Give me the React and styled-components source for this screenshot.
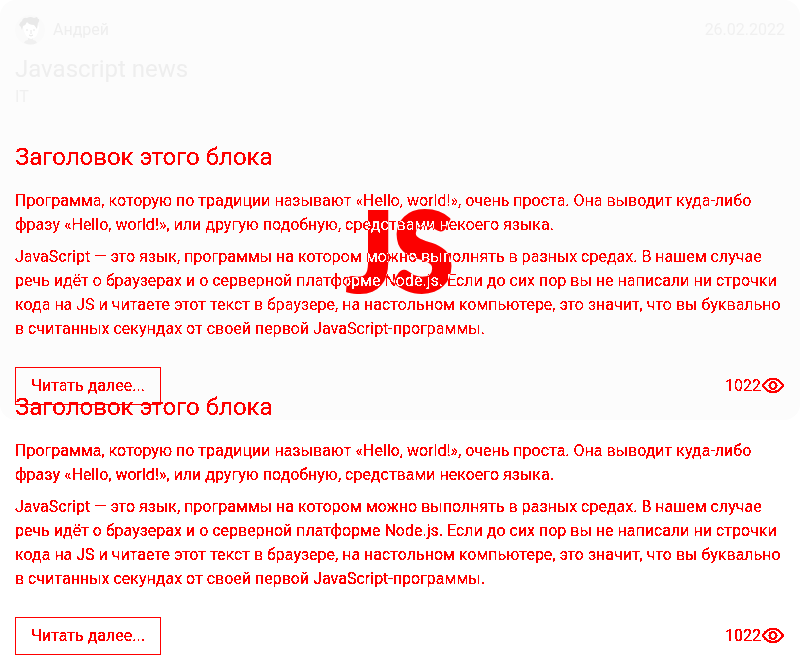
import React from "react";
import styled, { createGlobalStyle } from "styled-components";
import { MdOutlineVisibility } from "react-icons/md";

const GlobalStyle = createGlobalStyle`
  *, *::before, *::after { box-sizing: border-box; }
  body {
    margin: 0;
    background: #fff;
    color: #f00;
    font: 400 16px/24px Roboto, "Noto Sans", sans-serif;
  }
`;

const Page = styled.main`
  overflow: hidden;
`;

const Defs = styled.svg`
  position: absolute;
  width: 0;
  height: 0;
`;

const Card = styled.article`
  position: relative;
  isolation: isolate;
  padding: 15px;
  border-radius: 16px;
  background: #fcfcfc;
`;

const Header = styled.header`
  display: flex;
  align-items: center;
  color: #eee;
`;

const Avatar = styled.svg`
  width: 30px;
  height: 30px;
  margin-right: 8px;
`;

const UserName = styled.span`
  flex: 1;
`;

const CreatedAt = styled.time`
  color: #f0f0f0;
`;

const Title = styled.h1`
  margin: 8px 0 0;
  color: #eee;
  font-size: 24px;
  font-weight: 400;
  line-height: 32px;
`;

const Tag = styled.p`
  margin: 0 0 34px;
  color: #f0f0f0;
`;

const Section = styled.section`
  padding: ${({ $overlap }) => ($overlap ? "0 15px 15px" : "0")};
  margin-top: ${({ $overlap }) => ($overlap ? "-27px" : "0")};
  position: relative;
`;

const Heading = styled.h2`
  margin: 0 0 18px;
  font-size: 24px;
  font-weight: 400;
  line-height: 28px;
  filter: url(#crisp);
`;

const Content = styled.div`
  filter: url(${({ $bold }) => ($bold ? "#crispBold" : "#crisp")});
`;

const Paragraph = styled.p`
  margin: 0 0 8px;
`;

const Footer = styled.footer`
  display: flex;
  align-items: center;
  justify-content: space-between;
  margin-top: 26px;
`;

const ReadMore = styled.button`
  height: 38px;
  padding: 0 15px;
  border: 1px solid #f00;
  background: transparent;
  color: inherit;
  font: inherit;
  cursor: pointer;
`;

const Views = styled.span`
  display: flex;
  align-items: center;

  svg {
    width: 24px;
    height: 24px;
  }
`;

const LogoMark = styled.div`
  position: absolute;
  top: 189px;
  left: 0;
  right: 0;
  color: #00fcfc;
  font: 900 108px/120px Lato, sans-serif;
  -webkit-text-stroke: 4px #00fcfc;
  text-align: center;
  mix-blend-mode: difference;
  pointer-events: none;
`;

function TextBlock({ overlap, bold }) {
  return (
    <Section $overlap={overlap}>
      <Heading>Заголовок этого блока</Heading>
      <Content $bold={bold}>
        <Paragraph>
          Программа, которую по традиции называют «Hello, world!», очень проста. Она выводит куда-либо
          фразу «Hello, world!», или другую подобную, средствами некоего языка.
        </Paragraph>
        <Paragraph>
          JavaScript — это язык, программы на котором можно выполнять в разных средах. В нашем случае
          речь идёт о браузерах и о серверной платформе Node.js. Если до сих пор вы не написали ни строчки
          кода на JS и читаете этот текст в браузере, на настольном компьютере, это значит, что вы буквально
          в считанных секундах от своей первой JavaScript-программы.
        </Paragraph>
        <Footer>
          <ReadMore type="button">Читать далее...</ReadMore>
          <Views>
            1022
            <MdOutlineVisibility aria-hidden="true" />
          </Views>
        </Footer>
      </Content>
    </Section>
  );
}

function UserAvatar() {
  return (
    <Avatar viewBox="0 0 30 30" aria-hidden="true">
      <circle cx="15" cy="15" r="15" fill="#fafafa" />
      <path d="M9 28q1-3 4-3v-4h5v4q3 0 4 3-6 3-13 0Z" fill="#f0f0f0" />
      <path d="M8 12q1-6 8-6t8 6q-1 11-8 12-6-1-8-12Z" fill="#fff" />
      <path
        d="M7 15q-1-4-3-5 1-3 3-4 1-4 5-3 3-2 7 0l3-1 1 2h1q1 2-1 4l-1 6-3-4q-5 0-7-3-1 3-4 4Z"
        fill="#e9e9e9"
      />
      <path d="M11 15h2m5 0h2m-4 0v4m-2 1q2 2 4 0" fill="none" stroke="#e6e6e6" />
    </Avatar>
  );
}

export default function App() {
  return (
    <Page>
      <GlobalStyle />
      <Defs aria-hidden="true">
        <filter id="crisp" x="0" y="0" width="100%" height="100%">
          <feComponentTransfer>
            <feFuncA type="discrete" tableValues="0 0 1 1 1" />
          </feComponentTransfer>
        </filter>
        <filter id="crispBold" x="0" y="0" width="100%" height="100%">
          <feComponentTransfer>
            <feFuncA type="discrete" tableValues="0 1 1" />
          </feComponentTransfer>
        </filter>
      </Defs>
      <Card>
        <Header>
          <UserAvatar />
          <UserName>Андрей</UserName>
          <CreatedAt dateTime="2022-02-26">26.02.2022</CreatedAt>
        </Header>
        <Title>Javascript news</Title>
        <Tag>IT</Tag>
        <TextBlock />
        <LogoMark>JS</LogoMark>
      </Card>
      <TextBlock overlap bold />
    </Page>
  );
}
